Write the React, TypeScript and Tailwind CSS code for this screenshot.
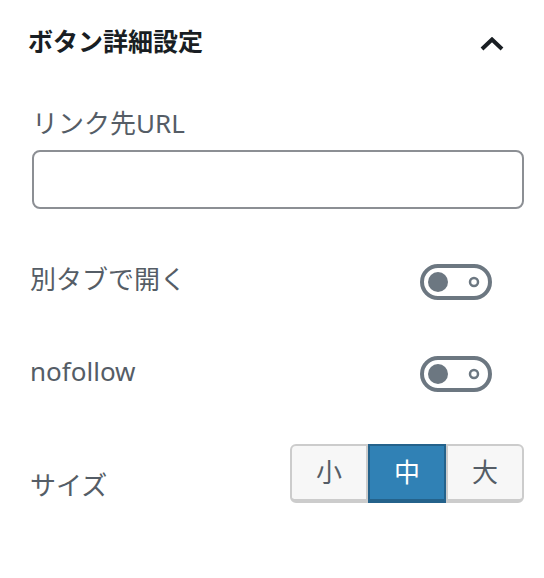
import React, { useState } from 'react';

const Toggle: React.FC<{ on?: boolean }> = ({ on }) => (
  <svg width="72" height="36" viewBox="0 0 72 36" className="block">
    <rect x="2" y="2" width="68" height="32" rx="16" fill="none" stroke="#6c7781" strokeWidth="4" />
    <circle cx={on ? 54 : 18} cy="18" r="10" fill="#6c7781" />
    <circle cx="54" cy="18" r="4" fill="none" stroke="#6c7781" strokeWidth="2.5" />
  </svg>
);

const App: React.FC = () => {
  const [size, setSize] = useState('中');

  return (
    <div
      className="w-[544px] h-[578px] bg-white text-[#555d66]"
      style={{ fontFamily: '"Noto Sans", "Noto Sans CJK JP", sans-serif' }}
    >
      {/* Panel header */}
      <div className="h-[82px] flex items-center justify-between pl-[28px] pr-[40px]">
        <h2 className="text-[25px] leading-[30px] font-bold text-[#191e23]">ボタン詳細設定</h2>
        <svg width="24" height="14" viewBox="0 0 24 14" className="mt-[6px]">
          <path d="M2 12 L12 2.5 L22 12" fill="none" stroke="#191e23" strokeWidth="4" />
        </svg>
      </div>

      <div className="pl-8 pr-5">
        {/* Link URL */}
        <label className="block mt-[26px] text-[26px] leading-[30px]">リンク先URL</label>
        <input
          type="text"
          className="block mt-[12px] w-full h-[59px] border-2 border-[#8c8f94] rounded-[8px] px-4 text-[26px] outline-none"
        />

        {/* Toggles */}
        <div className="flex items-start justify-between mt-[55px] pr-8 -ml-[2px]">
          <span className="text-[26px] leading-[30px]">別タブで開く</span>
          <Toggle />
        </div>
        <div className="flex items-start justify-between mt-[56px] pr-8 -ml-[2px]">
          <span className="text-[26px] leading-[30px]">nofollow</span>
          <Toggle />
        </div>

        {/* Size */}
        <div className="flex items-start justify-between mt-[52px] -ml-[2px]">
          <span className="mt-[26px] text-[26px] leading-[30px]">サイズ</span>
          <div className="flex">
            {['小', '中', '大'].map((s, i) => {
              const active = size === s;
              return (
                <button
                  key={s}
                  onClick={() => setSize(s)}
                  className={
                    'w-[78px] h-[59px] text-[26px] border-2 border-b-4 ' +
                    (active
                      ? 'bg-[#3081b5] border-[#24628b] text-white'
                      : 'bg-[#f7f7f7] border-[#cccccc] text-[#555d66]') +
                    (i === 0 ? ' rounded-l-[6px]' : '') +
                    (i === 2 ? ' rounded-r-[6px]' : '')
                  }
                >
                  {s}
                </button>
              );
            })}
          </div>
        </div>
      </div>
    </div>
  );
};

export default App;
